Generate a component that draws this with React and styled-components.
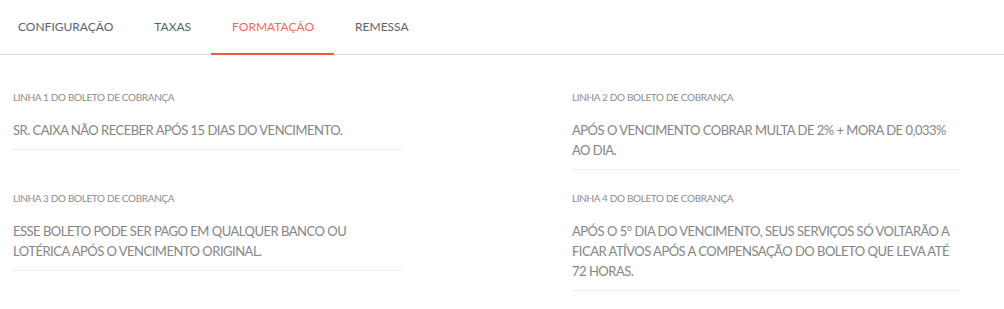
import React, { useState } from 'react';
import styled, { createGlobalStyle } from 'styled-components';

const GlobalStyle = createGlobalStyle`
  html, body {
    margin: 0;
    padding: 0;
    background: #fff;
  }
  body {
    font-family: Lato, "Liberation Sans", sans-serif;
  }
`;

const tabs = ['CONFIGURAÇÃO', 'TAXAS', 'FORMATAÇÃO', 'REMESSA'];

const fields = [
  {
    label: 'LINHA 1 DO BOLETO DE COBRANÇA',
    value: 'SR. CAIXA NÃO RECEBER APÓS 15 DIAS DO VENCIMENTO.',
  },
  {
    label: 'LINHA 2 DO BOLETO DE COBRANÇA',
    value: 'APÓS O VENCIMENTO COBRAR MULTA DE 2% + MORA DE 0,033% AO DIA.',
  },
  {
    label: 'LINHA 3 DO BOLETO DE COBRANÇA',
    value: 'ESSE BOLETO PODE SER PAGO EM QUALQUER BANCO OU LOTÉRICA APÓS O VENCIMENTO ORIGINAL.',
  },
  {
    label: 'LINHA 4 DO BOLETO DE COBRANÇA',
    value:
      'APÓS O 5° DIA DO VENCIMENTO, SEUS SERVIÇOS SÓ VOLTARÃO A FICAR ATÍVOS APÓS A COMPENSAÇÃO DO BOLETO QUE LEVA ATÉ 72 HORAS.',
  },
];

const App = () => {
  const [active, setActive] = useState(2);

  return (
    <Page>
      <GlobalStyle />
      <TabBar>
        {tabs.map((tab, i) => (
          <Tab key={tab} $active={i === active} onClick={() => setActive(i)}>
            {tab}
          </Tab>
        ))}
      </TabBar>
      <FieldGrid>
        {fields.map(field => (
          <Field key={field.label}>
            <Label>{field.label}</Label>
            <Value>{field.value}</Value>
          </Field>
        ))}
      </FieldGrid>
    </Page>
  );
};

export default App;

const Page = styled.div`
  width: 1004px;
  height: 309px;
  background: #fff;
`;

const TabBar = styled.div`
  display: flex;
  height: 54px;
  border-bottom: 1px solid #dcdcdc;
`;

const Tab = styled.div`
  display: flex;
  align-items: center;
  padding: 0 20px 0 21px;
  font-size: 12px;
  color: ${p => (p.$active ? '#f36b50' : '#5b616c')};
  border-bottom: 2px solid ${p => (p.$active ? '#f25a3c' : 'transparent')};
  margin-bottom: -1px;
  cursor: pointer;

  &:first-child {
    padding-left: 18px;
  }
`;

const FieldGrid = styled.div`
  display: grid;
  grid-template-columns: 389px 389px;
  column-gap: 170px;
  row-gap: 21px;
  padding: 35px 0 0 13px;
`;

const Field = styled.div`
  display: flex;
  flex-direction: column;
`;

const Label = styled.div`
  font-size: 10px;
  line-height: 14px;
  letter-spacing: -0.35px;
  color: #8c8c8c;
  margin-bottom: 16px;
`;

const Value = styled.div`
  font-size: 13px;
  line-height: 20px;
  letter-spacing: -0.5px;
  color: #858585;
  padding-bottom: 9px;
  border-bottom: 1px solid #ededed;
`;
